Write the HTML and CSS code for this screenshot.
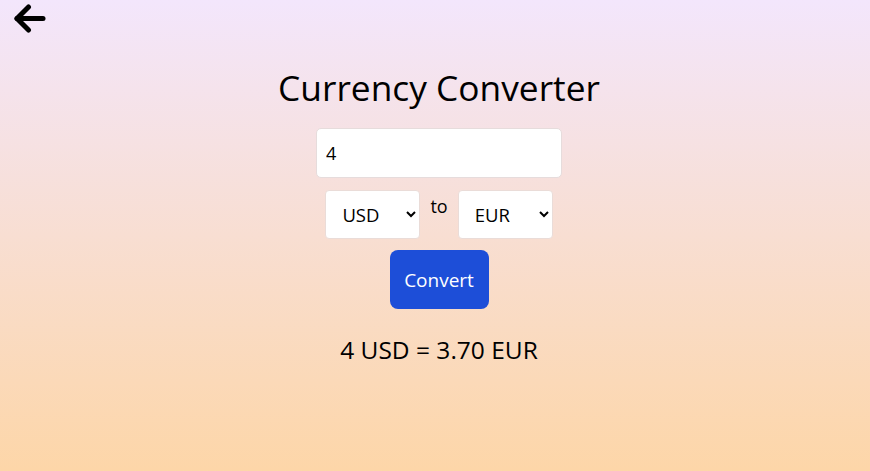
FILE: index.html
```html
<!DOCTYPE html>
<html lang="en">
<head>
<meta charset="utf-8">
<title>Currency Converter</title>
<link rel="stylesheet" href="styles.css">
</head>
<body>
<div class="page">
  <a class="back" href="#" aria-label="Back">
    <svg width="33" height="29" viewBox="0 0 33 29" fill="none" stroke="#000" stroke-width="5" stroke-linecap="round" stroke-linejoin="round">
      <path d="M30 14.5H4"/>
      <path d="M15.5 3L4 14.5 15.5 26"/>
    </svg>
  </a>
  <main class="main">
    <h1 class="title">Currency Converter</h1>
    <input class="amount" type="number" value="4">
    <div class="row">
      <select class="sel"><option>USD</option><option>EUR</option></select>
      <span class="to">to</span>
      <select class="sel"><option>EUR</option><option>USD</option></select>
    </div>
    <button class="btn">Convert</button>
    <p class="result">4 USD = 3.70 EUR</p>
  </main>
</div>
</body>
</html>
```

FILE: styles.css
```css
* { box-sizing: border-box; }
html, body { margin: 0; height: 100%; }
body {
  font-family: "Open Sans", "Noto Sans", sans-serif;
  background: linear-gradient(to bottom, #f3e6fc, #fdd6a8);
  color: #000;
}
.page { min-height: 100%; padding-top: 4px; }
.back { display: block; margin-left: 13px; width: 33px; height: 29px; }
.back svg { display: block; }
.main {
  display: flex;
  flex-direction: column;
  align-items: center;
  padding-left: 8px;
}
.title {
  margin: 30px 0 0;
  font-size: 35.3px;
  font-weight: 400;
  line-height: 48px;
}
.amount {
  margin-top: 17px;
  width: 246px;
  height: 50px;
  border: 1px solid #e6dcdc;
  border-radius: 5px;
  background: #fff;
  font: inherit;
  font-size: 18px;
  padding: 0 9px;
  outline: none;
}
.row {
  margin-top: 12px;
  display: flex;
  align-items: flex-start;
  gap: 10px;
}
.sel {
  width: 95px;
  height: 49px;
  border: 1px solid #eadcd8;
  border-radius: 4px;
  background: #fff;
  font: inherit;
  font-size: 18.5px;
  padding: 0 8px 0 12px;
}
.to { font-size: 18px; line-height: 30px; padding-top: 1px; }
.btn {
  margin-top: 11px;
  width: 99px;
  height: 59px;
  border: none;
  border-radius: 8px;
  background: #1d4ed8;
  color: #fff;
  font: inherit;
  font-size: 19px;
}
.result {
  margin: 25px 0 0;
  font-size: 24.5px;
  line-height: 32px;
}
```
